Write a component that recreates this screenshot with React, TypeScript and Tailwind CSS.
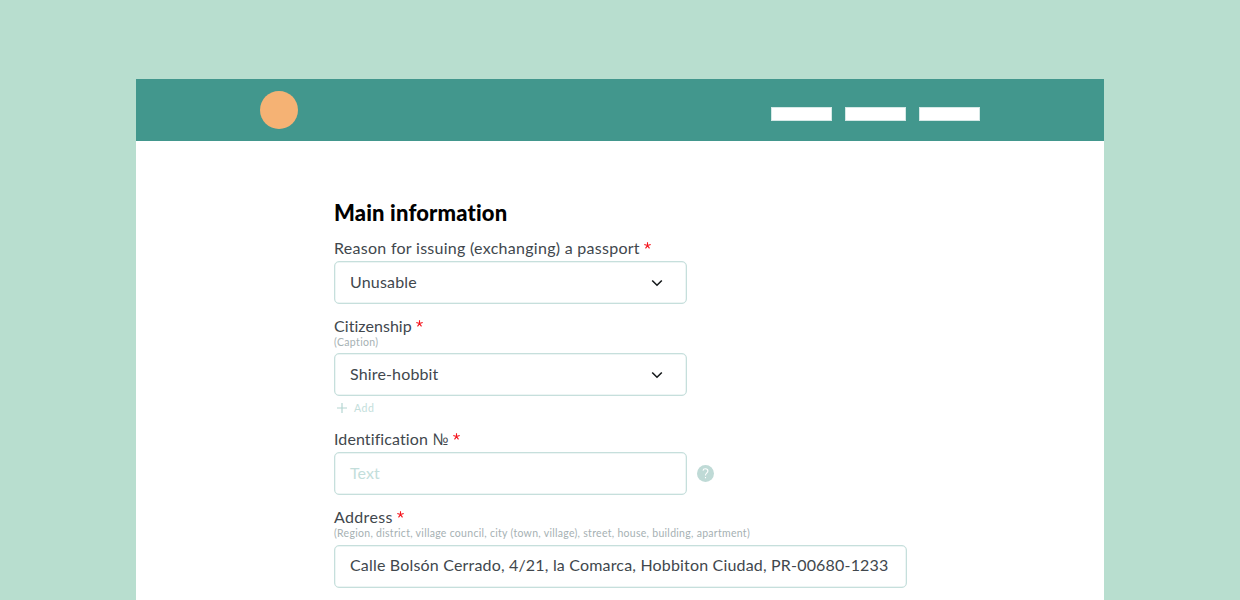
import type { ReactNode } from "react";

function Label({ children, className = "" }: { children: ReactNode; className?: string }) {
  return (
    <div className={`flex h-5 items-center whitespace-pre text-base leading-5 text-[#41474d] ${className}`}>
      {children}
    </div>
  );
}

function Required() {
  return (
    <svg className="-mt-[5px] ml-1 size-[7px]" viewBox="0 0 7 7" fill="none" stroke="#f5141c" strokeWidth="1.1">
      <path d="M3.5 3.6V0.2M3.5 3.6L0.3 2.6M3.5 3.6L6.7 2.6M3.5 3.6L1.5 6.4M3.5 3.6L5.5 6.4" />
    </svg>
  );
}

function Caption({ children, className = "" }: { children: ReactNode; className?: string }) {
  return (
    <div className={`-mt-px h-[14px] whitespace-nowrap text-[10.5px] leading-[14px] text-[#a6b1b3] ${className}`}>
      {children}
    </div>
  );
}

function Field({ children, className = "" }: { children: ReactNode; className?: string }) {
  return (
    <div
      className={`flex h-[43px] items-center whitespace-nowrap rounded-[5px] border border-[#c6dfdc] pl-[15px] text-base leading-5 shadow-[inset_0_0_0_0.5px_#dcecea] ${className}`}
    >
      {children}
    </div>
  );
}

function Chevron() {
  return (
    <svg className="mr-[23px] mt-[3px] ml-auto h-2 w-3" viewBox="0 0 12 8" fill="none" stroke="#15191b" strokeWidth="1.6">
      <path d="M1.2 1.5L6 6.2L10.8 1.5" />
    </svg>
  );
}

export default function App() {
  return (
    <div className="h-[600px] w-[1240px] overflow-hidden bg-[#b8decf] px-[136px] pt-[79px] font-['Lato','Open_Sans',sans-serif]">
      <div className="h-full bg-white">
        <header className="flex h-[62px] items-start justify-between bg-[#42978d] pl-[124px] pr-[124px]">
          <div className="mt-3 size-[38px] rounded-full bg-[#f5b274]" />
          <nav className="mt-7 flex gap-[13px]">
            <div className="h-[14px] w-[61px] border border-[#d5e8e6] bg-white" />
            <div className="h-[14px] w-[61px] border border-[#d5e8e6] bg-white" />
            <div className="h-[14px] w-[61px] border border-[#d5e8e6] bg-white" />
          </nav>
        </header>

        <main className="pl-[198px] pt-[58px]">
          <h1 className="h-7 text-[22px] font-black leading-7 tracking-[0.15px] text-black">Main information</h1>

          <section className="mt-[11px]">
            <Label className="tracking-[0.28px]">
              Reason for issuing (exchanging) a passport
              <Required />
            </Label>
            <Field className="mt-[3px] w-[353px] pb-[2px] tracking-[0.19px] text-[#41474d]">
              Unusable
              <Chevron />
            </Field>
          </section>

          <section className="mt-3">
            <Label className="tracking-[0.05px]">
              Citizenship
              <Required />
            </Label>
            <Caption className="tracking-[0.35px]">(Caption)</Caption>
            <Field className="mt-1 w-[353px] pb-[2px] tracking-[0.15px] text-[#41474d]">
              Shire-hobbit
              <Chevron />
            </Field>
            <div className="mt-[5px] flex h-[14px] items-center text-[10.5px] leading-[14px] tracking-[0.6px] text-[#c3dedb]">
              <svg className="ml-[3px] mr-[7px] size-[10px]" viewBox="0 0 10 10" stroke="#b5d6d2" strokeWidth="1.2">
                <path d="M5 0V10M0 5H10" />
              </svg>
              Add
            </div>
          </section>

          <section className="mt-[13px]">
            <Label className="pt-px tracking-[0.1px]">
              Identification <span className="font-['Open_Sans']">№</span>
              <Required />
            </Label>
            <div className="mt-1 flex items-center">
              <Field className="w-[353px] pb-[2px] tracking-[0.1px] text-[#c3dedb]">Text</Field>
              <div className="-mt-px ml-[10px] flex size-[17px] items-center justify-center rounded-full bg-[#bfdad6]">
                <svg className="h-[11px] w-[7px]" viewBox="0 0 7 11" fill="none" stroke="#fff" strokeWidth="1.1">
                  <path d="M1 2.6C1.1 1.4 2 .8 3.4 .8C4.8 .8 5.9 1.6 5.9 2.9C5.9 4.9 3.5 4.8 3.5 7.4M3.5 9V10.3" />
                </svg>
              </div>
            </div>
          </section>

          <section className="mt-3">
            <Label className="tracking-[0.33px]">
              Address
              <Required />
            </Label>
            <Caption className="tracking-[0.29px]">
              (Region, district, village council, city (town, village), street, house, building, apartment)
            </Caption>
            <Field className="mt-[5px] w-[573px] pb-1 tracking-[0.18px] text-[#41474d]">
              Calle Bolsón Cerrado, 4/21, la Comarca, Hobbiton Ciudad, PR-00680-1233
            </Field>
          </section>
        </main>
      </div>
    </div>
  );
}
